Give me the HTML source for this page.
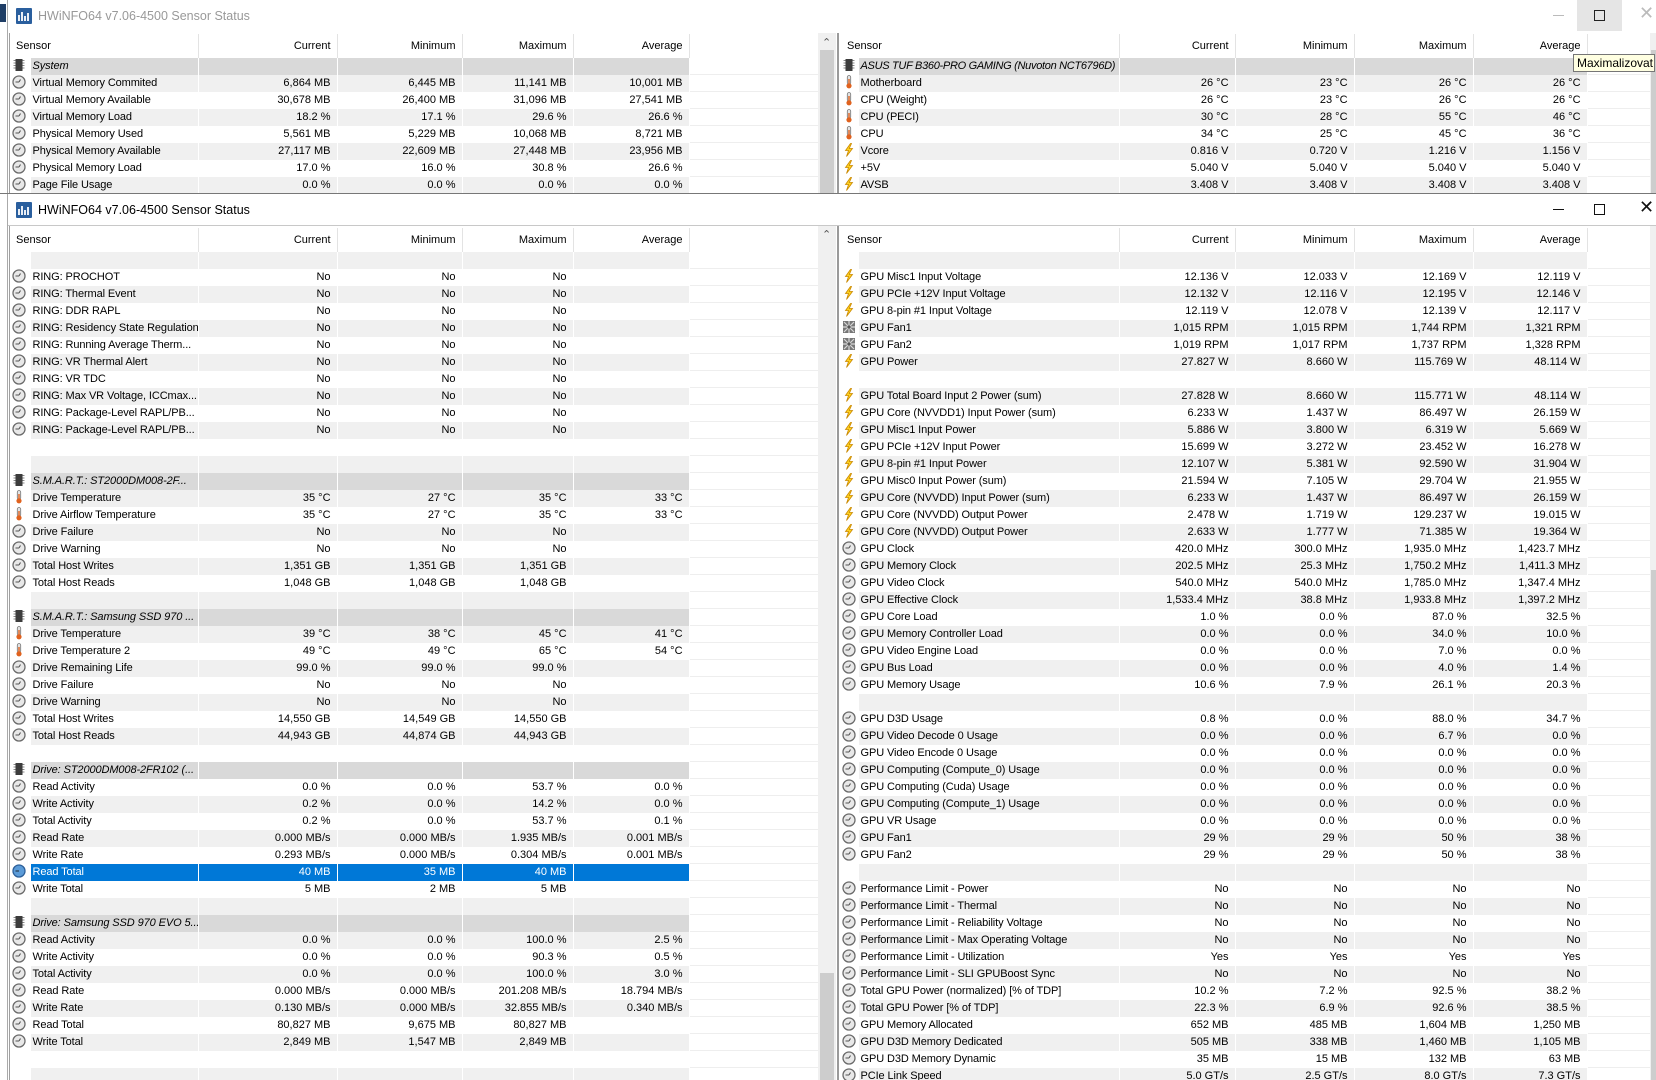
<!DOCTYPE html>
<html><head><meta charset="utf-8">
<style>
*{margin:0;padding:0;box-sizing:border-box}
body{width:1656px;height:1080px;overflow:hidden;background:#fff;font-family:"Liberation Sans",sans-serif;font-size:11px;color:#000;position:relative}
.win{position:absolute;left:8px;width:1648px;overflow:hidden;background:#fff}
.title{position:absolute;left:0;top:0;height:32px;width:100%;font-size:12.5px;line-height:32px;padding-left:30px}
.title svg{position:absolute;left:8px;top:8px}
table{position:absolute;border-collapse:collapse;table-layout:fixed}
td{height:17px;line-height:17px;padding:0 6px 0 0;text-align:right;white-space:nowrap;overflow:hidden;border-right:1px solid #fff}
td:nth-child(1){padding:0;text-align:center}
td:nth-child(2){text-align:left;padding-left:2px;letter-spacing:-0.1px}
td:last-child{box-shadow:inset 0 -1px #eeeeee;border-right:0}
td svg{width:14px;height:14px;vertical-align:middle;margin-top:-2px}
tr.g td:nth-child(n+2):nth-child(-n+6){background:#f0f0f0}
tr.h td:nth-child(n+2):nth-child(-n+6){background:#d9d9d9}
tr.h td:nth-child(2){font-style:italic}
tr.s td:nth-child(n+2):nth-child(-n+6){background:#0078d7;color:#fff}
tr.hd td{height:24px;line-height:24px;border-right:1px solid #e3e3e3;box-shadow:none}
tr.hd td:nth-child(n+2){text-align:right;padding:0 6px 0 0;letter-spacing:0}
tr.hd td:first-child{text-align:left;padding-left:7px}
.sb{position:absolute;background:#f0f0f0}
.th{position:absolute;background:#cdcdcd}
.div{position:absolute;background:#9a9a9a}
</style></head><body>
<svg width="0" height="0" style="position:absolute">
<defs>
<symbol id="c" viewBox="0 0 14 14"><circle cx="7" cy="7" r="6" fill="#e8e8e8" stroke="#6a6a6a" stroke-width="1.3"/><path d="M7 7H3.5M7 7L8.5 4.5" stroke="#555" stroke-width="1.1" fill="none"/></symbol>
<symbol id="cs" viewBox="0 0 14 14"><circle cx="7" cy="7" r="6" fill="#5b9bd8" stroke="#2c5f99" stroke-width="1.3"/><path d="M7 7H3.5" stroke="#234" stroke-width="1.1"/></symbol>
<symbol id="t" viewBox="0 0 14 14"><rect x="5.3" y="0.5" width="3.4" height="9" rx="1.7" fill="#e4e4e4" stroke="#777" stroke-width=".8"/><circle cx="7" cy="10.8" r="2.6" fill="#e0621e"/><rect x="6.3" y="4" width="1.4" height="6" fill="#e0621e"/></symbol>
<symbol id="b" viewBox="0 0 14 14"><path d="M8.5 0.5L3.5 7.5h3l-2 6 6-8H7.3l2.2-5z" fill="#ffd21f" stroke="#c98800" stroke-width=".8"/></symbol>
<symbol id="f" viewBox="0 0 14 14"><rect x="1" y="1" width="12" height="12" fill="#777"/><path d="M1 7h12M7 1v12M2 2l10 10M12 2L2 12" stroke="#d8d8d8" stroke-width="1.2"/><circle cx="7" cy="7" r="1.6" fill="#555"/></symbol>
<symbol id="p" viewBox="0 0 14 14"><rect x="3.5" y="1" width="7" height="12" fill="#3c3c3c"/><path d="M1.5 2.5h2M1.5 5h2M1.5 7.5h2M1.5 10h2M10.5 2.5h2M10.5 5h2M10.5 7.5h2M10.5 10h2" stroke="#888" stroke-width="1"/></symbol>
<symbol id="app" viewBox="0 0 16 16"><rect width="16" height="16" rx="1" fill="#2a5f9e"/><path d="M3 13V7M6 13V4M9 13V8M12 13V5" stroke="#fff" stroke-width="1.8"/></symbol>
</defs></svg>

<div style="position:absolute;left:0;top:4px;width:6px;height:18px;background:#1f3e66"></div>
<div style="position:absolute;left:7px;top:0;width:1px;height:1080px;background:#aaa"></div>

<!-- WINDOW 1 -->
<div class="win" style="top:0;height:193px">
<div class="title" style="color:#999"><svg width="16" height="16"><use href="#app"/></svg>HWiNFO64 v7.06-4500 Sensor Status</div>
<div style="position:absolute;left:1545px;top:15px;width:11px;height:1px;background:#bbb"></div>
<div style="position:absolute;left:1569px;top:0;width:45px;height:31px;background:#e5e5e5"></div>
<div style="position:absolute;left:1586px;top:10px;width:11px;height:11px;border:1px solid #222"></div>
<div style="position:absolute;left:1631px;top:3px;font-size:18px;color:#bbb">✕</div>
<div style="position:absolute;left:1px;top:33px;width:1px;height:160px;background:#a0a0a0"></div>
<table style="left:1px;top:34px;width:809px">
<colgroup><col style="width:21px"><col style="width:168px"><col style="width:139px"><col style="width:125px"><col style="width:111px"><col style="width:116px"><col style="width:129px"></colgroup>
<tr class="hd"><td colspan="2">Sensor<td>Current<td>Minimum<td>Maximum<td>Average<td></tr>
<tr class="h"><td><svg><use href="#p"/></svg><td>System<td><td><td><td><td></tr>
<tr class="g"><td><svg><use href="#c"/></svg><td>Virtual Memory Commited<td>6,864 MB<td>6,445 MB<td>11,141 MB<td>10,001 MB<td></tr>
<tr><td><svg><use href="#c"/></svg><td>Virtual Memory Available<td>30,678 MB<td>26,400 MB<td>31,096 MB<td>27,541 MB<td></tr>
<tr class="g"><td><svg><use href="#c"/></svg><td>Virtual Memory Load<td>18.2 %<td>17.1 %<td>29.6 %<td>26.6 %<td></tr>
<tr><td><svg><use href="#c"/></svg><td>Physical Memory Used<td>5,561 MB<td>5,229 MB<td>10,068 MB<td>8,721 MB<td></tr>
<tr class="g"><td><svg><use href="#c"/></svg><td>Physical Memory Available<td>27,117 MB<td>22,609 MB<td>27,448 MB<td>23,956 MB<td></tr>
<tr><td><svg><use href="#c"/></svg><td>Physical Memory Load<td>17.0 %<td>16.0 %<td>30.8 %<td>26.6 %<td></tr>
<tr class="g"><td><svg><use href="#c"/></svg><td>Page File Usage<td>0.0 %<td>0.0 %<td>0.0 %<td>0.0 %<td></tr>
</table>
<div class="sb" style="left:810px;top:33px;width:18px;height:160px"></div>
<div style="position:absolute;left:814px;top:36px;font-size:11px;color:#555">&#8963;</div>
<div class="th" style="left:812px;top:50px;width:14px;height:143px"></div>
<div class="div" style="left:829px;top:33px;width:2px;height:160px"></div>
<table style="left:832px;top:34px;width:810px">
<colgroup><col style="width:18px"><col style="width:261px"><col style="width:116px"><col style="width:119px"><col style="width:119px"><col style="width:114px"><col style="width:63px"></colgroup>
<tr class="hd"><td colspan="2">Sensor<td>Current<td>Minimum<td>Maximum<td>Average<td></tr>
<tr class="h"><td><svg><use href="#p"/></svg><td style="letter-spacing:-0.3px">ASUS TUF B360-PRO GAMING (Nuvoton NCT6796D)<td><td><td><td><td></tr>
<tr class="g"><td><svg><use href="#t"/></svg><td>Motherboard<td>26 °C<td>23 °C<td>26 °C<td>26 °C<td></tr>
<tr><td><svg><use href="#t"/></svg><td>CPU (Weight)<td>26 °C<td>23 °C<td>26 °C<td>26 °C<td></tr>
<tr class="g"><td><svg><use href="#t"/></svg><td>CPU (PECI)<td>30 °C<td>28 °C<td>55 °C<td>46 °C<td></tr>
<tr><td><svg><use href="#t"/></svg><td>CPU<td>34 °C<td>25 °C<td>45 °C<td>36 °C<td></tr>
<tr class="g"><td><svg><use href="#b"/></svg><td>Vcore<td>0.816 V<td>0.720 V<td>1.216 V<td>1.156 V<td></tr>
<tr><td><svg><use href="#b"/></svg><td>+5V<td>5.040 V<td>5.040 V<td>5.040 V<td>5.040 V<td></tr>
<tr class="g"><td><svg><use href="#b"/></svg><td>AVSB<td>3.408 V<td>3.408 V<td>3.408 V<td>3.408 V<td></tr>
</table>
<div class="sb" style="left:1642px;top:33px;width:6px;height:160px"></div>
<div class="th" style="left:1643px;top:50px;width:5px;height:143px"></div>
</div>
<div style="position:absolute;left:0;top:193px;width:1656px;height:1px;background:#777"></div>

<!-- WINDOW 2 -->
<div class="win" style="top:194px;height:886px">
<div class="title" style="color:#000"><svg width="16" height="16"><use href="#app"/></svg>HWiNFO64 v7.06-4500 Sensor Status</div>
<div style="position:absolute;left:1545px;top:15px;width:11px;height:1px;background:#111"></div>
<div style="position:absolute;left:1586px;top:10px;width:11px;height:11px;border:1px solid #111"></div>
<div style="position:absolute;left:1631px;top:3px;font-size:18px;color:#111">✕</div>
<div style="position:absolute;left:0;top:31px;width:1648px;height:1px;background:#c8c8c8"></div>
<div style="position:absolute;left:1px;top:32px;width:1px;height:854px;background:#a0a0a0"></div>
<table style="left:1px;top:34px;width:809px">
<colgroup><col style="width:21px"><col style="width:168px"><col style="width:139px"><col style="width:125px"><col style="width:111px"><col style="width:116px"><col style="width:129px"></colgroup>
<tr class="hd"><td colspan="2">Sensor<td>Current<td>Minimum<td>Maximum<td>Average<td></tr>
<tr class="g"><td><td><td><td><td><td><td></tr>
<tr><td><svg><use href="#c"/></svg><td>RING: PROCHOT<td>No<td>No<td>No<td><td></tr>
<tr class="g"><td><svg><use href="#c"/></svg><td>RING: Thermal Event<td>No<td>No<td>No<td><td></tr>
<tr><td><svg><use href="#c"/></svg><td>RING: DDR RAPL<td>No<td>No<td>No<td><td></tr>
<tr class="g"><td><svg><use href="#c"/></svg><td>RING: Residency State Regulation<td>No<td>No<td>No<td><td></tr>
<tr><td><svg><use href="#c"/></svg><td>RING: Running Average Therm...<td>No<td>No<td>No<td><td></tr>
<tr class="g"><td><svg><use href="#c"/></svg><td>RING: VR Thermal Alert<td>No<td>No<td>No<td><td></tr>
<tr><td><svg><use href="#c"/></svg><td>RING: VR TDC<td>No<td>No<td>No<td><td></tr>
<tr class="g"><td><svg><use href="#c"/></svg><td>RING: Max VR Voltage, ICCmax...<td>No<td>No<td>No<td><td></tr>
<tr><td><svg><use href="#c"/></svg><td>RING: Package-Level RAPL/PB...<td>No<td>No<td>No<td><td></tr>
<tr class="g"><td><svg><use href="#c"/></svg><td>RING: Package-Level RAPL/PB...<td>No<td>No<td>No<td><td></tr>
<tr><td><td><td><td><td><td><td></tr>
<tr class="g"><td><td><td><td><td><td><td></tr>
<tr class="h"><td><svg><use href="#p"/></svg><td>S.M.A.R.T.: ST2000DM008-2F...<td><td><td><td><td></tr>
<tr class="g"><td><svg><use href="#t"/></svg><td>Drive Temperature<td>35 °C<td>27 °C<td>35 °C<td>33 °C<td></tr>
<tr><td><svg><use href="#t"/></svg><td>Drive Airflow Temperature<td>35 °C<td>27 °C<td>35 °C<td>33 °C<td></tr>
<tr class="g"><td><svg><use href="#c"/></svg><td>Drive Failure<td>No<td>No<td>No<td><td></tr>
<tr><td><svg><use href="#c"/></svg><td>Drive Warning<td>No<td>No<td>No<td><td></tr>
<tr class="g"><td><svg><use href="#c"/></svg><td>Total Host Writes<td>1,351 GB<td>1,351 GB<td>1,351 GB<td><td></tr>
<tr><td><svg><use href="#c"/></svg><td>Total Host Reads<td>1,048 GB<td>1,048 GB<td>1,048 GB<td><td></tr>
<tr class="g"><td><td><td><td><td><td><td></tr>
<tr class="h"><td><svg><use href="#p"/></svg><td>S.M.A.R.T.: Samsung SSD 970 ...<td><td><td><td><td></tr>
<tr class="g"><td><svg><use href="#t"/></svg><td>Drive Temperature<td>39 °C<td>38 °C<td>45 °C<td>41 °C<td></tr>
<tr><td><svg><use href="#t"/></svg><td>Drive Temperature 2<td>49 °C<td>49 °C<td>65 °C<td>54 °C<td></tr>
<tr class="g"><td><svg><use href="#c"/></svg><td>Drive Remaining Life<td>99.0 %<td>99.0 %<td>99.0 %<td><td></tr>
<tr><td><svg><use href="#c"/></svg><td>Drive Failure<td>No<td>No<td>No<td><td></tr>
<tr class="g"><td><svg><use href="#c"/></svg><td>Drive Warning<td>No<td>No<td>No<td><td></tr>
<tr><td><svg><use href="#c"/></svg><td>Total Host Writes<td>14,550 GB<td>14,549 GB<td>14,550 GB<td><td></tr>
<tr class="g"><td><svg><use href="#c"/></svg><td>Total Host Reads<td>44,943 GB<td>44,874 GB<td>44,943 GB<td><td></tr>
<tr><td><td><td><td><td><td><td></tr>
<tr class="h"><td><svg><use href="#p"/></svg><td>Drive: ST2000DM008-2FR102 (...<td><td><td><td><td></tr>
<tr><td><svg><use href="#c"/></svg><td>Read Activity<td>0.0 %<td>0.0 %<td>53.7 %<td>0.0 %<td></tr>
<tr class="g"><td><svg><use href="#c"/></svg><td>Write Activity<td>0.2 %<td>0.0 %<td>14.2 %<td>0.0 %<td></tr>
<tr><td><svg><use href="#c"/></svg><td>Total Activity<td>0.2 %<td>0.0 %<td>53.7 %<td>0.1 %<td></tr>
<tr class="g"><td><svg><use href="#c"/></svg><td>Read Rate<td>0.000 MB/s<td>0.000 MB/s<td>1.935 MB/s<td>0.001 MB/s<td></tr>
<tr><td><svg><use href="#c"/></svg><td>Write Rate<td>0.293 MB/s<td>0.000 MB/s<td>0.304 MB/s<td>0.001 MB/s<td></tr>
<tr class="s"><td><svg><use href="#cs"/></svg><td>Read Total<td>40 MB<td>35 MB<td>40 MB<td><td></tr>
<tr><td><svg><use href="#c"/></svg><td>Write Total<td>5 MB<td>2 MB<td>5 MB<td><td></tr>
<tr class="g"><td><td><td><td><td><td><td></tr>
<tr class="h"><td><svg><use href="#p"/></svg><td>Drive: Samsung SSD 970 EVO 5...<td><td><td><td><td></tr>
<tr class="g"><td><svg><use href="#c"/></svg><td>Read Activity<td>0.0 %<td>0.0 %<td>100.0 %<td>2.5 %<td></tr>
<tr><td><svg><use href="#c"/></svg><td>Write Activity<td>0.0 %<td>0.0 %<td>90.3 %<td>0.5 %<td></tr>
<tr class="g"><td><svg><use href="#c"/></svg><td>Total Activity<td>0.0 %<td>0.0 %<td>100.0 %<td>3.0 %<td></tr>
<tr><td><svg><use href="#c"/></svg><td>Read Rate<td>0.000 MB/s<td>0.000 MB/s<td>201.208 MB/s<td>18.794 MB/s<td></tr>
<tr class="g"><td><svg><use href="#c"/></svg><td>Write Rate<td>0.130 MB/s<td>0.000 MB/s<td>32.855 MB/s<td>0.340 MB/s<td></tr>
<tr><td><svg><use href="#c"/></svg><td>Read Total<td>80,827 MB<td>9,675 MB<td>80,827 MB<td><td></tr>
<tr class="g"><td><svg><use href="#c"/></svg><td>Write Total<td>2,849 MB<td>1,547 MB<td>2,849 MB<td><td></tr>
<tr><td><td><td><td><td><td><td></tr>
<tr class="g"><td><td><td><td><td><td><td></tr>
</table>
<div class="sb" style="left:810px;top:32px;width:18px;height:854px"></div>
<div style="position:absolute;left:814px;top:34px;font-size:11px;color:#555">&#8963;</div>
<div class="th" style="left:812px;top:779px;width:14px;height:107px"></div>
<div class="div" style="left:829px;top:32px;width:2px;height:854px"></div>
<table style="left:832px;top:34px;width:810px">
<colgroup><col style="width:18px"><col style="width:261px"><col style="width:116px"><col style="width:119px"><col style="width:119px"><col style="width:114px"><col style="width:63px"></colgroup>
<tr class="hd"><td colspan="2">Sensor<td>Current<td>Minimum<td>Maximum<td>Average<td></tr>
<tr class="g"><td><td><td><td><td><td><td></tr>
<tr><td><svg><use href="#b"/></svg><td>GPU Misc1 Input Voltage<td>12.136 V<td>12.033 V<td>12.169 V<td>12.119 V<td></tr>
<tr class="g"><td><svg><use href="#b"/></svg><td>GPU PCIe +12V Input Voltage<td>12.132 V<td>12.116 V<td>12.195 V<td>12.146 V<td></tr>
<tr><td><svg><use href="#b"/></svg><td>GPU 8-pin #1 Input Voltage<td>12.119 V<td>12.078 V<td>12.139 V<td>12.117 V<td></tr>
<tr class="g"><td><svg><use href="#f"/></svg><td>GPU Fan1<td>1,015 RPM<td>1,015 RPM<td>1,744 RPM<td>1,321 RPM<td></tr>
<tr><td><svg><use href="#f"/></svg><td>GPU Fan2<td>1,019 RPM<td>1,017 RPM<td>1,737 RPM<td>1,328 RPM<td></tr>
<tr class="g"><td><svg><use href="#b"/></svg><td>GPU Power<td>27.827 W<td>8.660 W<td>115.769 W<td>48.114 W<td></tr>
<tr><td><td><td><td><td><td><td></tr>
<tr class="g"><td><svg><use href="#b"/></svg><td>GPU Total Board Input 2 Power (sum)<td>27.828 W<td>8.660 W<td>115.771 W<td>48.114 W<td></tr>
<tr><td><svg><use href="#b"/></svg><td>GPU Core (NVVDD1) Input Power (sum)<td>6.233 W<td>1.437 W<td>86.497 W<td>26.159 W<td></tr>
<tr class="g"><td><svg><use href="#b"/></svg><td>GPU Misc1 Input Power<td>5.886 W<td>3.800 W<td>6.319 W<td>5.669 W<td></tr>
<tr><td><svg><use href="#b"/></svg><td>GPU PCIe +12V Input Power<td>15.699 W<td>3.272 W<td>23.452 W<td>16.278 W<td></tr>
<tr class="g"><td><svg><use href="#b"/></svg><td>GPU 8-pin #1 Input Power<td>12.107 W<td>5.381 W<td>92.590 W<td>31.904 W<td></tr>
<tr><td><svg><use href="#b"/></svg><td>GPU Misc0 Input Power (sum)<td>21.594 W<td>7.105 W<td>29.704 W<td>21.955 W<td></tr>
<tr class="g"><td><svg><use href="#b"/></svg><td>GPU Core (NVVDD) Input Power (sum)<td>6.233 W<td>1.437 W<td>86.497 W<td>26.159 W<td></tr>
<tr><td><svg><use href="#b"/></svg><td>GPU Core (NVVDD) Output Power<td>2.478 W<td>1.719 W<td>129.237 W<td>19.015 W<td></tr>
<tr class="g"><td><svg><use href="#b"/></svg><td>GPU Core (NVVDD) Output Power<td>2.633 W<td>1.777 W<td>71.385 W<td>19.364 W<td></tr>
<tr><td><svg><use href="#c"/></svg><td>GPU Clock<td>420.0 MHz<td>300.0 MHz<td>1,935.0 MHz<td>1,423.7 MHz<td></tr>
<tr class="g"><td><svg><use href="#c"/></svg><td>GPU Memory Clock<td>202.5 MHz<td>25.3 MHz<td>1,750.2 MHz<td>1,411.3 MHz<td></tr>
<tr><td><svg><use href="#c"/></svg><td>GPU Video Clock<td>540.0 MHz<td>540.0 MHz<td>1,785.0 MHz<td>1,347.4 MHz<td></tr>
<tr class="g"><td><svg><use href="#c"/></svg><td>GPU Effective Clock<td>1,533.4 MHz<td>38.8 MHz<td>1,933.8 MHz<td>1,397.2 MHz<td></tr>
<tr><td><svg><use href="#c"/></svg><td>GPU Core Load<td>1.0 %<td>0.0 %<td>87.0 %<td>32.5 %<td></tr>
<tr class="g"><td><svg><use href="#c"/></svg><td>GPU Memory Controller Load<td>0.0 %<td>0.0 %<td>34.0 %<td>10.0 %<td></tr>
<tr><td><svg><use href="#c"/></svg><td>GPU Video Engine Load<td>0.0 %<td>0.0 %<td>7.0 %<td>0.0 %<td></tr>
<tr class="g"><td><svg><use href="#c"/></svg><td>GPU Bus Load<td>0.0 %<td>0.0 %<td>4.0 %<td>1.4 %<td></tr>
<tr><td><svg><use href="#c"/></svg><td>GPU Memory Usage<td>10.6 %<td>7.9 %<td>26.1 %<td>20.3 %<td></tr>
<tr class="g"><td><td><td><td><td><td><td></tr>
<tr><td><svg><use href="#c"/></svg><td>GPU D3D Usage<td>0.8 %<td>0.0 %<td>88.0 %<td>34.7 %<td></tr>
<tr class="g"><td><svg><use href="#c"/></svg><td>GPU Video Decode 0 Usage<td>0.0 %<td>0.0 %<td>6.7 %<td>0.0 %<td></tr>
<tr><td><svg><use href="#c"/></svg><td>GPU Video Encode 0 Usage<td>0.0 %<td>0.0 %<td>0.0 %<td>0.0 %<td></tr>
<tr class="g"><td><svg><use href="#c"/></svg><td>GPU Computing (Compute_0) Usage<td>0.0 %<td>0.0 %<td>0.0 %<td>0.0 %<td></tr>
<tr><td><svg><use href="#c"/></svg><td>GPU Computing (Cuda) Usage<td>0.0 %<td>0.0 %<td>0.0 %<td>0.0 %<td></tr>
<tr class="g"><td><svg><use href="#c"/></svg><td>GPU Computing (Compute_1) Usage<td>0.0 %<td>0.0 %<td>0.0 %<td>0.0 %<td></tr>
<tr><td><svg><use href="#c"/></svg><td>GPU VR Usage<td>0.0 %<td>0.0 %<td>0.0 %<td>0.0 %<td></tr>
<tr class="g"><td><svg><use href="#c"/></svg><td>GPU Fan1<td>29 %<td>29 %<td>50 %<td>38 %<td></tr>
<tr><td><svg><use href="#c"/></svg><td>GPU Fan2<td>29 %<td>29 %<td>50 %<td>38 %<td></tr>
<tr class="g"><td><td><td><td><td><td><td></tr>
<tr><td><svg><use href="#c"/></svg><td>Performance Limit - Power<td>No<td>No<td>No<td>No<td></tr>
<tr class="g"><td><svg><use href="#c"/></svg><td>Performance Limit - Thermal<td>No<td>No<td>No<td>No<td></tr>
<tr><td><svg><use href="#c"/></svg><td>Performance Limit - Reliability Voltage<td>No<td>No<td>No<td>No<td></tr>
<tr class="g"><td><svg><use href="#c"/></svg><td>Performance Limit - Max Operating Voltage<td>No<td>No<td>No<td>No<td></tr>
<tr><td><svg><use href="#c"/></svg><td>Performance Limit - Utilization<td>Yes<td>Yes<td>Yes<td>Yes<td></tr>
<tr class="g"><td><svg><use href="#c"/></svg><td>Performance Limit - SLI GPUBoost Sync<td>No<td>No<td>No<td>No<td></tr>
<tr><td><svg><use href="#c"/></svg><td>Total GPU Power (normalized) [% of TDP]<td>10.2 %<td>7.2 %<td>92.5 %<td>38.2 %<td></tr>
<tr class="g"><td><svg><use href="#c"/></svg><td>Total GPU Power [% of TDP]<td>22.3 %<td>6.9 %<td>92.6 %<td>38.5 %<td></tr>
<tr><td><svg><use href="#c"/></svg><td>GPU Memory Allocated<td>652 MB<td>485 MB<td>1,604 MB<td>1,250 MB<td></tr>
<tr class="g"><td><svg><use href="#c"/></svg><td>GPU D3D Memory Dedicated<td>505 MB<td>338 MB<td>1,460 MB<td>1,105 MB<td></tr>
<tr><td><svg><use href="#c"/></svg><td>GPU D3D Memory Dynamic<td>35 MB<td>15 MB<td>132 MB<td>63 MB<td></tr>
<tr class="g"><td><svg><use href="#c"/></svg><td>PCIe Link Speed<td>5.0 GT/s<td>2.5 GT/s<td>8.0 GT/s<td>7.3 GT/s<td></tr>
</table>
<div class="sb" style="left:1642px;top:32px;width:6px;height:854px"></div>
<div class="th" style="left:1643px;top:376px;width:5px;height:510px"></div>
</div>

<div style="position:absolute;left:1573px;top:54px;width:82px;height:18px;background:#ffffe1;border:1px solid #767676;font-size:12px;line-height:16px;padding-left:3px;white-space:nowrap">Maximalizovat</div>
</body></html>
